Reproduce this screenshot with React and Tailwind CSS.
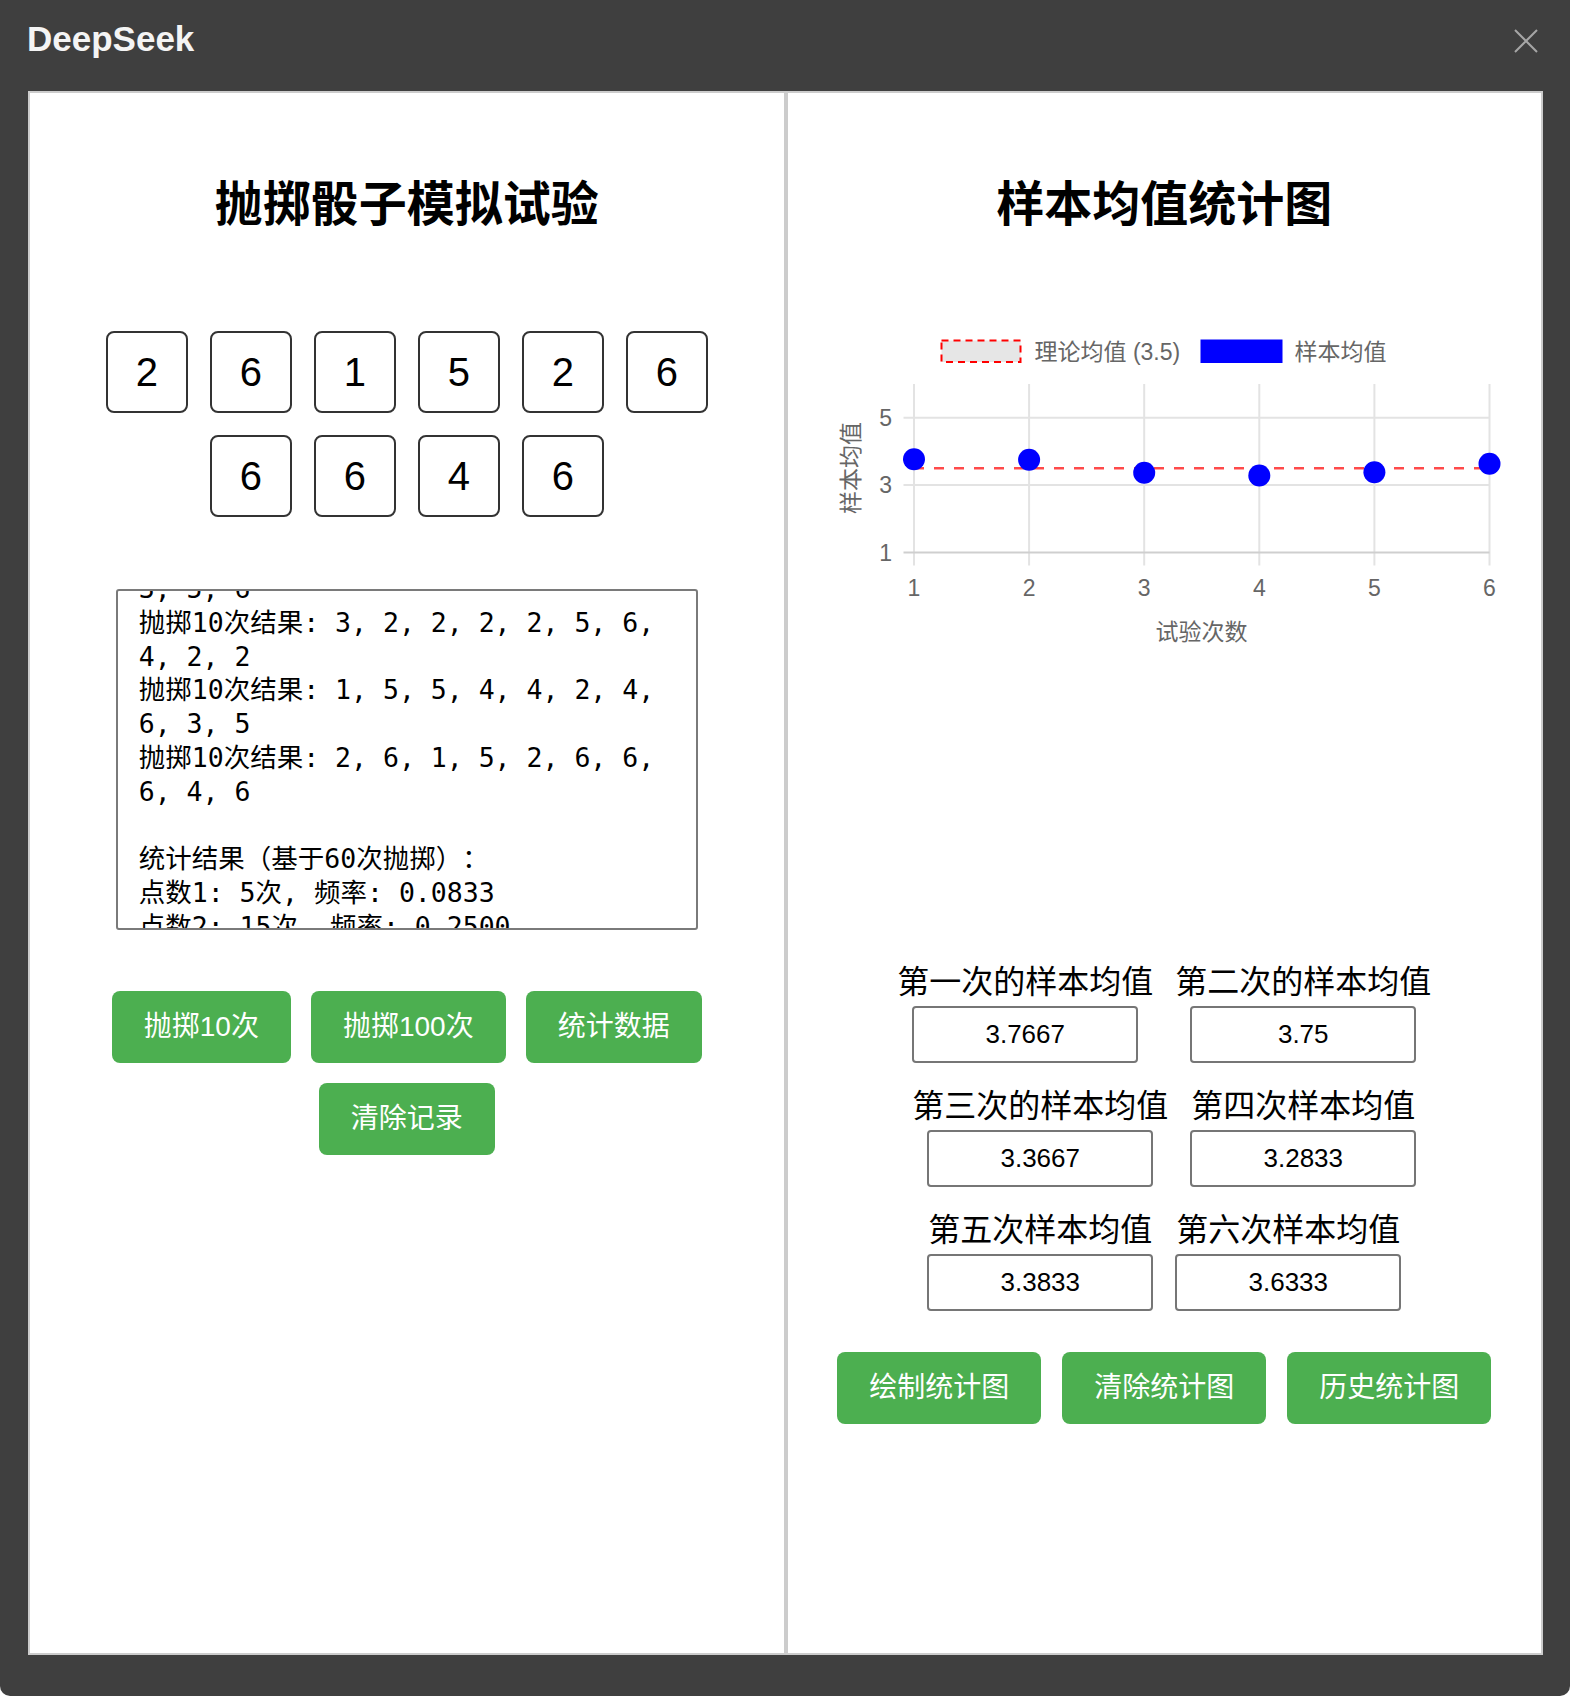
import React from 'react';

const dice = [2, 6, 1, 5, 2, 6, 6, 6, 4, 6];

// textarea is scrolled, first and last lines are cut off
const logLines = [
  '3, 5, 6',
  '抛掷10次结果: 3, 2, 2, 2, 2, 5, 6,',
  '4, 2, 2',
  '抛掷10次结果: 1, 5, 5, 4, 4, 2, 4,',
  '6, 3, 5',
  '抛掷10次结果: 2, 6, 1, 5, 2, 6, 6,',
  '6, 4, 6',
  '',
  '统计结果（基于60次抛掷）：',
  '点数1: 5次, 频率: 0.0833',
  '点数2: 15次, 频率: 0.2500',
];

const means = [3.7667, 3.75, 3.3667, 3.2833, 3.3833, 3.6333];

const meanRows = [
  [
    { label: '第一次的样本均值', value: '3.7667' },
    { label: '第二次的样本均值', value: '3.75' },
  ],
  [
    { label: '第三次的样本均值', value: '3.3667' },
    { label: '第四次样本均值', value: '3.2833' },
  ],
  [
    { label: '第五次样本均值', value: '3.3833' },
    { label: '第六次样本均值', value: '3.6333' },
  ],
];

const GreenButton = ({ children }) => (
  <button className="h-[72px] px-8 rounded-[8px] bg-[#4caf50] text-white text-[28px] leading-none flex items-center">
    {children}
  </button>
);

const xAt = i => 126 + i * 115.1;
const yAt = v => 232.5 - (v - 1) * 33.7;

const MeanChart = () => {
  const chartFont = "'Liberation Sans', 'Noto Sans CJK SC', sans-serif";
  return (
    <svg width="753" height="330" viewBox="0 0 753 330" className="block mt-[86px]" style={{ fontFamily: chartFont }}>
      {/* legend */}
      <rect x="153.5" y="20.5" width="79" height="21.5" fill="#e6e6e6" stroke="#ff0000" strokeWidth="2" strokeDasharray="7 5" />
      <text x="246.5" y="31.5" fontSize="23" fill="#666" dominantBaseline="central">理论均值 (3.5)</text>
      <rect x="412.5" y="19.5" width="82" height="23.5" fill="#0000ff" />
      <text x="506.5" y="31.5" fontSize="23" fill="#666" dominantBaseline="central">样本均值</text>

      {/* grid */}
      {means.map((_, i) => (
        <line key={'v' + i} x1={xAt(i)} y1="64" x2={xAt(i)} y2="245.5" stroke="#e3e3e3" strokeWidth="2" />
      ))}
      {[5, 3].map(v => (
        <line key={'h' + v} x1="115.5" y1={yAt(v)} x2={xAt(5)} y2={yAt(v)} stroke="#e3e3e3" strokeWidth="2" />
      ))}
      <line x1="115.5" y1={yAt(1)} x2={xAt(5)} y2={yAt(1)} stroke="#cfcfcf" strokeWidth="2" />

      {/* y ticks */}
      {[5, 3, 1].map(v => (
        <text key={'yt' + v} x="104" y={yAt(v)} fontSize="23" fill="#666" textAnchor="end" dominantBaseline="central">{v}</text>
      ))}
      {/* x ticks */}
      {means.map((_, i) => (
        <text key={'xt' + i} x={xAt(i)} y="268" fontSize="23" fill="#666" textAnchor="middle" dominantBaseline="central">{i + 1}</text>
      ))}

      <text x="413.5" y="311.5" fontSize="23" fill="#666" textAnchor="middle" dominantBaseline="central">试验次数</text>
      <text transform="translate(62.5,148) rotate(-90)" fontSize="23" fill="#666" textAnchor="middle" dominantBaseline="central">样本均值</text>

      {/* theoretical mean */}
      <line x1={xAt(0)} y1={yAt(3.5)} x2={xAt(5)} y2={yAt(3.5)} stroke="#ff2a2a" strokeOpacity="0.85" strokeWidth="2.5" strokeDasharray="10 10" />

      {/* sample means */}
      {means.map((m, i) => (
        <circle key={'p' + i} cx={xAt(i)} cy={yAt(m)} r="11" fill="#0000ff" />
      ))}
    </svg>
  );
};

export default function App() {
  return (
    <div className="min-h-screen bg-white font-['Liberation_Sans','Noto_Sans_CJK_SC',sans-serif]">
      <div className="w-[1570px] h-[1696px] bg-[#3f3f3f] rounded-b-[10px] flex flex-col">
        {/* title bar */}
        <div className="h-[91px] flex items-start justify-between pl-[27px] pr-[32px] pt-[22px]">
          <span className="text-[35px] leading-[34px] font-bold text-[#f4f4f4]">DeepSeek</span>
          <svg width="24" height="24" viewBox="0 0 24 24" className="mt-[7px]">
            <path d="M1 1 L23 23 M23 1 L1 23" stroke="#a6a6a6" strokeWidth="2" fill="none" />
          </svg>
        </div>

        <div className="ml-[28px] w-[1515px] h-[1564px] flex">
          {/* left: dice simulation */}
          <div className="flex-1 border-2 border-[#cccccc] bg-white flex flex-col items-center">
            <h1 className="mt-[83px] text-[48px] leading-[58px] font-bold text-black">抛掷骰子模拟试验</h1>

            <div className="mt-[97px] w-[640px] flex flex-wrap justify-center gap-[22px]">
              {dice.map((d, i) => (
                <div key={i} className="w-[82px] h-[82px] border-2 border-[#333333] rounded-[8px] flex items-center justify-center text-[40px] text-black">
                  {d}
                </div>
              ))}
            </div>

            <div className="mt-[72px] w-[582px] h-[341px] border-2 border-[#7a7a7a] rounded-[3px] overflow-hidden pl-[21px] pr-[11px]">
              <div className="-mt-[19px] font-['DejaVu_Sans_Mono','Noto_Sans_CJK_SC',monospace] text-[26.5px] leading-[33.8px] text-black whitespace-pre [text-spacing-trim:space-all]">
                {logLines.map((line, i) => (
                  <div key={i}>{line || '\u00a0'}</div>
                ))}
              </div>
            </div>

            <div className="mt-[61px] flex gap-[20px]">
              <GreenButton>抛掷10次</GreenButton>
              <GreenButton>抛掷100次</GreenButton>
              <GreenButton>统计数据</GreenButton>
            </div>
            <div className="mt-[20px] flex">
              <GreenButton>清除记录</GreenButton>
            </div>
          </div>

          {/* right: mean chart */}
          <div className="flex-1 border-2 border-[#cccccc] bg-white flex flex-col items-center">
            <h1 className="mt-[83px] text-[48px] leading-[58px] font-bold text-black">样本均值统计图</h1>

            <MeanChart />

            <div className="mt-[313px] flex flex-col items-center gap-[24px]">
              {meanRows.map((row, r) => (
                <div key={r} className="flex items-start gap-x-[22px]">
                  {row.map(item => (
                    <div key={item.label} className="flex flex-col items-center">
                      <div className="text-[32px] leading-[38px] text-black whitespace-nowrap">{item.label}</div>
                      <input
                        readOnly
                        value={item.value}
                        className="mt-[5px] w-[226px] h-[57px] border-2 border-[#767676] rounded-[4px] text-center text-[26px] text-black bg-white outline-none"
                      />
                    </div>
                  ))}
                </div>
              ))}
            </div>

            <div className="mt-[41px] flex gap-[21px]">
              <GreenButton>绘制统计图</GreenButton>
              <GreenButton>清除统计图</GreenButton>
              <GreenButton>历史统计图</GreenButton>
            </div>
          </div>
        </div>
      </div>
    </div>
  );
}
